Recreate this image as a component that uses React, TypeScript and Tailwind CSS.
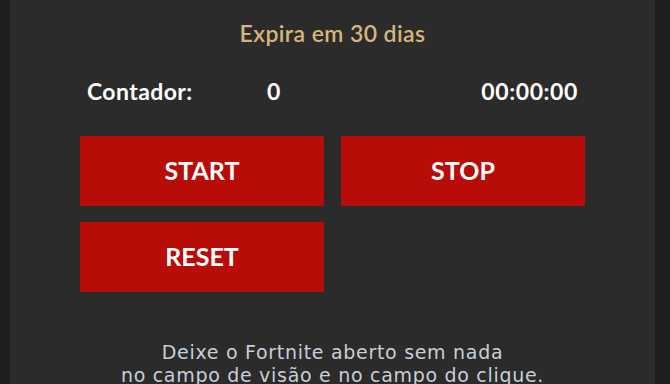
export default function App() {
  return (
    <div className="w-full h-[384px] overflow-hidden bg-[#1f1f1f] flex pl-[10px] pr-[15px]">
      <div className="flex-1 bg-[#2b2b2b] flex flex-col items-center" style={{ fontFamily: 'Lato, "Open Sans", sans-serif' }}>
        <div className="mt-[18px] h-[30px] leading-[30px] text-[23px] font-semibold tracking-[0.4px] text-[#d6b57d]">Expira em 30 dias</div>
        <div className="mt-[28px] w-full px-[77px] flex items-center h-[30px] text-[23px] font-bold text-white">
          <span className="w-[180px] tracking-[0.4px]">Contador:</span>
          <span>0</span>
          <span className="ml-auto tracking-[0.6px]">00:00:00</span>
        </div>
        <div className="mt-[30px] grid grid-cols-2 gap-x-[17px] gap-y-[16px] w-[505px]">
          <button className="h-[70px] bg-[#b80c08] text-white font-bold text-[25px]">START</button>
          <button className="h-[70px] bg-[#b80c08] text-white font-bold text-[25px]">STOP</button>
          <button className="h-[70px] bg-[#b80c08] text-white font-bold text-[25px]">RESET</button>
        </div>
        <div className="mt-[49px] text-center text-[19px] leading-[23px] tracking-[0.7px] text-[#c9ced8]" style={{ fontFamily: '"DejaVu Sans", sans-serif' }}>
          <p>Deixe o Fortnite aberto sem nada</p>
          <p>no campo de visão e no campo do clique.</p>
        </div>
      </div>
    </div>
  );
}
